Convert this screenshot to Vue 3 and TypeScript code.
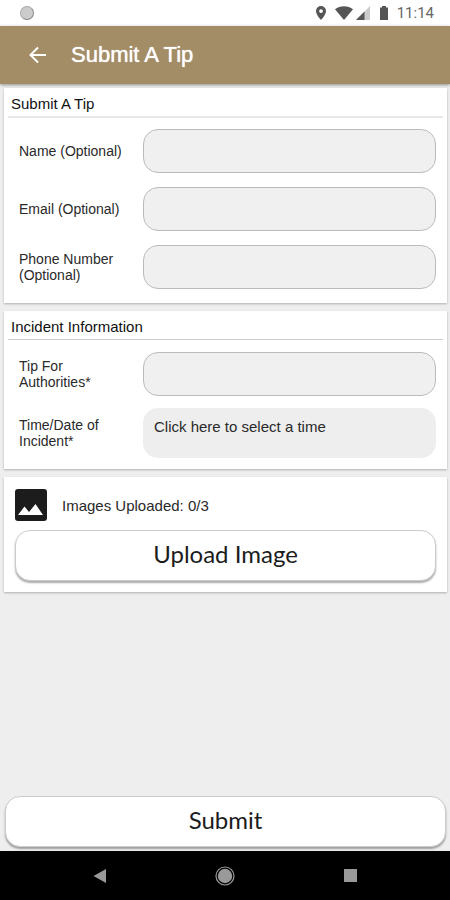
<script setup lang="ts">
import { ref } from 'vue'

interface Field {
  id: string
  label: string
  type: string
}

const contactFields: Field[] = [
  { id: 'name', label: 'Name (Optional)', type: 'text' },
  { id: 'email', label: 'Email (Optional)', type: 'email' },
  { id: 'phone', label: 'Phone Number (Optional)', type: 'tel' },
]

const values = ref<Record<string, string>>({ name: '', email: '', phone: '', tip: '' })
const uploaded = ref(0)
const maxImages = 3

function addImage(): void {
  if (uploaded.value < maxImages) uploaded.value += 1
}
</script>

<template>
  <div class="screen">
    <div class="status">
      <span class="dot"></span>
      <div class="indicators">
        <svg class="pin" width="12" height="16" viewBox="0 0 12 16">
          <path fill="#555" fill-rule="evenodd" d="M6 1a5 5 0 0 0-5 5c0 3.700 5 9 5 9s5-5.300 5-9a5 5 0 0 0-5-5zm0 3.200a1.900 1.900 0 1 1 0 3.800 1.900 1.900 0 0 1 0-3.800z" />
        </svg>
        <svg class="wifi" width="18" height="14" viewBox="0 0 18 14">
          <path fill="#555" d="M0 3.200C5 -.8 13 -.8 18 3.200L9 14z" />
        </svg>
        <svg class="cell" width="14" height="14" viewBox="0 0 14 14">
          <path fill="#ccc" d="M14 0v14H0z" />
          <path fill="#555" d="M8.500 5.500V14H0z" />
        </svg>
        <svg class="battery" width="10" height="16" viewBox="0 0 10 16">
          <path fill="#555" d="M3 1h4v1.500h2V15H1V2.500h2z" />
        </svg>
        <span class="clock">11:14</span>
      </div>
    </div>

    <header class="bar">
      <button class="back" type="button" aria-label="Back">
        <svg width="18" height="18" viewBox="0 0 18 18">
          <path d="M17 9H2M9 1.500L1.500 9L9 16.500" fill="none" stroke="#fff" stroke-width="2" />
        </svg>
      </button>
      <h1>Submit A Tip</h1>
    </header>

    <form class="body" @submit.prevent>
      <section class="card">
        <h2 class="thick">Submit A Tip</h2>
        <div class="fields spaced">
          <div v-for="f in contactFields" :key="f.id" class="row">
            <label :for="f.id">{{ f.label }}</label>
            <input :id="f.id" v-model="values[f.id]" :type="f.type" />
          </div>
        </div>
      </section>

      <section class="card">
        <h2>Incident Information</h2>
        <div class="fields">
          <div class="row">
            <label for="tip">Tip For Authorities*</label>
            <input id="tip" v-model="values.tip" type="text" />
          </div>
          <div class="row">
            <label for="time">Time/Date of Incident*</label>
            <button id="time" class="time" type="button">Click here to select a time</button>
          </div>
        </div>
      </section>

      <section class="card images">
        <div class="count">
          <svg width="32" height="32" viewBox="0 0 32 32">
            <rect width="32" height="32" rx="3" fill="#1c1c1c" />
            <path fill="#fff" d="M3 26L9.500 17.500L14 23L20.500 15L28 26z" />
          </svg>
          <span>Images Uploaded: {{ uploaded }}/{{ maxImages }}</span>
        </div>
        <button class="pill" type="button" @click="addImage">Upload Image</button>
      </section>

      <div class="submit">
        <button class="pill" type="submit">Submit</button>
      </div>
    </form>

    <nav class="nav">
      <button type="button" aria-label="Back">
        <svg width="20" height="20" viewBox="0 0 20 20"><path fill="#999" d="M16 3v14L3.500 10z" /></svg>
      </button>
      <button type="button" aria-label="Home">
        <svg width="20" height="20" viewBox="0 0 20 20">
          <circle cx="10" cy="10" r="9" fill="none" stroke="#999" stroke-width="1.200" />
          <circle cx="10" cy="10" r="7.200" fill="#999" />
        </svg>
      </button>
      <button type="button" aria-label="Recent apps">
        <svg width="20" height="20" viewBox="0 0 20 20"><rect x="4" y="3" width="13" height="13" fill="#999" /></svg>
      </button>
    </nav>
  </div>
</template>

<style>
body {
  background: #eee;
}
</style>

<style scoped>
* {
  box-sizing: border-box;
}
.screen {
  min-height: 100vh;
  display: flex;
  flex-direction: column;
  background: #eee;
  color: #2a2a2a;
  font-family: 'Liberation Sans', Arial, sans-serif;
  font-size: 15px;
}
button {
  font: inherit;
  color: inherit;
  border: 0;
  padding: 0;
  background: none;
}
svg {
  display: block;
}
.status {
  height: 26px;
  padding: 0 16px 0 20px;
  display: flex;
  align-items: center;
  justify-content: space-between;
  background: #fff;
}
.dot {
  width: 14px;
  height: 14px;
  border-radius: 50%;
  background: #ccc;
  border: 1px solid #aaa;
  border-right-color: #888;
  border-bottom-color: #888;
}
.indicators {
  display: flex;
  align-items: center;
}
.wifi {
  margin-left: 8px;
}
.cell {
  margin-left: 3px;
}
.battery {
  margin-left: 9px;
}
.clock {
  margin-left: 8px;
  font-family: Roboto, sans-serif;
  font-size: 15px;
  line-height: 26px;
  color: #666;
}
.bar {
  height: 58px;
  padding: 0 29px;
  display: flex;
  align-items: center;
  gap: 24px;
  background: #a38d67;
  color: #fff;
  box-shadow: 0 1px 3px #0006;
}
h1 {
  margin: 0;
  font-size: 22px;
  line-height: 26px;
  font-weight: 400;
  text-shadow: 0 0 1px #fff;
}
.body {
  flex: 1;
  padding: 4px 3px 4px 4px;
  display: flex;
  flex-direction: column;
  gap: 8px;
}
.card {
  background: #fff;
  box-shadow: 0 1px 2px #0004;
}
h2 {
  margin: 0 4px;
  padding: 8px 3px 4px;
  border-bottom: 1px solid #ccc;
  font-size: 15px;
  line-height: 16px;
  font-weight: 400;
  color: #111;
}
h2.thick {
  border-bottom: 2px solid #e8e8e8;
}
.fields {
  padding: 12px 11px 11px 15px;
  display: grid;
  gap: 12px;
}
.fields.spaced {
  padding-top: 11px;
  padding-bottom: 14px;
  gap: 14px;
}
.row {
  display: grid;
  grid-template-columns: 124px 1fr;
  align-items: center;
}
label {
  padding-right: 12px;
  font-size: 14px;
  line-height: 16px;
}
input {
  width: 100%;
  height: 44px;
  padding: 0 12px;
  border: 1px solid #bbb;
  border-radius: 15px;
  background: #f0f0f0;
  font: inherit;
}
.time {
  height: 50px;
  padding: 11px;
  display: flex;
  align-items: flex-start;
  border-radius: 15px;
  background: #eee;
  line-height: 16px;
}
.images {
  padding: 12px 11px 11px;
}
.count {
  margin-bottom: 9px;
  display: flex;
  align-items: center;
  gap: 15px;
}
.pill {
  width: 100%;
  height: 51px;
  padding-bottom: 3px;
  border: 1px solid #ccc;
  border-radius: 15px;
  background: #fff;
  box-shadow: 0 2px 2px #0005;
  font-family: Lato, sans-serif;
  font-size: 24px;
  line-height: 30px;
  color: #1c1c1c;
}
.submit {
  margin-top: auto;
  padding: 0 1px;
}
.nav {
  height: 49px;
  padding: 0 38px;
  display: grid;
  grid-template-columns: repeat(3, 1fr);
  background: #000;
}
.nav button {
  display: grid;
  place-items: center;
}
</style>
